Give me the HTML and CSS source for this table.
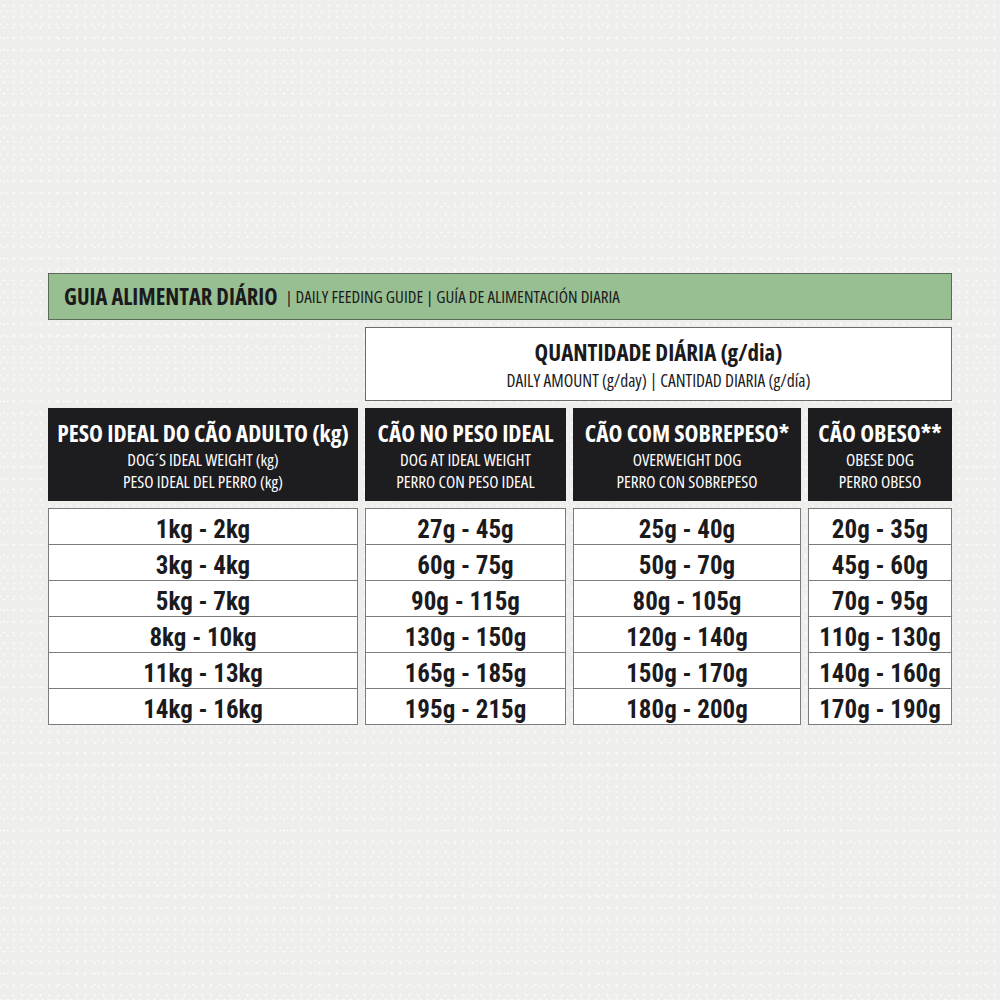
FILE: index.html
```html
<!DOCTYPE html>
<html lang="pt">
<head>
<meta charset="utf-8">
<title>Guia Alimentar Diário</title>
<link rel="stylesheet" href="styles.css">
</head>
<body>
<main class="sheet">
  <header class="title-bar">
    <span class="title-main">GUIA ALIMENTAR DIÁRIO</span>
    <span class="title-sub">| DAILY FEEDING GUIDE | GUÍA DE ALIMENTACIÓN DIARIA</span>
  </header>
  <section class="grid">
    <div class="spacer"></div>
    <div class="amount">
      <div class="amount-main">QUANTIDADE DIÁRIA (g/dia)</div>
      <div class="amount-sub">DAILY AMOUNT (g/day) | CANTIDAD DIARIA (g/día)</div>
    </div>

    <div class="head">
      <div class="head-main">PESO IDEAL DO CÃO ADULTO (kg)</div>
      <div class="head-sub">DOG´S IDEAL WEIGHT (kg)</div>
      <div class="head-sub">PESO IDEAL DEL PERRO (kg)</div>
    </div>
    <div class="head">
      <div class="head-main">CÃO NO PESO IDEAL</div>
      <div class="head-sub">DOG AT IDEAL WEIGHT</div>
      <div class="head-sub">PERRO CON PESO IDEAL</div>
    </div>
    <div class="head">
      <div class="head-main">CÃO COM SOBREPESO*</div>
      <div class="head-sub">OVERWEIGHT DOG</div>
      <div class="head-sub">PERRO CON SOBREPESO</div>
    </div>
    <div class="head">
      <div class="head-main">CÃO OBESO**</div>
      <div class="head-sub">OBESE DOG</div>
      <div class="head-sub">PERRO OBESO</div>
    </div>

    <div class="col">
      <div class="cell">1kg - 2kg</div>
      <div class="cell">3kg - 4kg</div>
      <div class="cell">5kg - 7kg</div>
      <div class="cell">8kg - 10kg</div>
      <div class="cell">11kg - 13kg</div>
      <div class="cell">14kg - 16kg</div>
    </div>
    <div class="col">
      <div class="cell">27g - 45g</div>
      <div class="cell">60g - 75g</div>
      <div class="cell">90g - 115g</div>
      <div class="cell">130g - 150g</div>
      <div class="cell">165g - 185g</div>
      <div class="cell">195g - 215g</div>
    </div>
    <div class="col">
      <div class="cell">25g - 40g</div>
      <div class="cell">50g - 70g</div>
      <div class="cell">80g - 105g</div>
      <div class="cell">120g - 140g</div>
      <div class="cell">150g - 170g</div>
      <div class="cell">180g - 200g</div>
    </div>
    <div class="col">
      <div class="cell">20g - 35g</div>
      <div class="cell">45g - 60g</div>
      <div class="cell">70g - 95g</div>
      <div class="cell">110g - 130g</div>
      <div class="cell">140g - 160g</div>
      <div class="cell">170g - 190g</div>
    </div>
  </section>
</main>
</body>
</html>
```
FILE: styles.css
```css
html, body {
  margin: 0;
  padding: 0;
}
body {
  width: 1000px;
  height: 1000px;
  background-color: #eeeeec;
  background-image:
    radial-gradient(circle, #fafaf9 0.9px, transparent 1.3px),
    radial-gradient(circle, #f7f7f6 0.9px, transparent 1.3px);
  background-size: 9px 11px, 7px 13px;
  background-position: 0 0, 4px 5px;
  font-family: "Open Sans", "DejaVu Sans Condensed", sans-serif;
  font-stretch: 75%;
  color: #1b1a1d;
}
.sheet {
  padding: 273px 48px 0 48px;
  width: 904px;
}
.title-bar {
  box-sizing: border-box;
  height: 47px;
  background: #98bf92;
  border: 1px solid #5d6a5b;
  display: flex;
  align-items: center;
  padding-left: 15px;
  gap: 8px;
  white-space: nowrap;
}
.title-main {
  font-weight: 700;
  font-size: 22.5px;
}
.title-sub {
  font-size: 17px;
}
.grid {
  margin-top: 7px;
  display: grid;
  grid-template-columns: 310px 201px 228px 144px;
  column-gap: 7px;
  row-gap: 7px;
}
.amount {
  grid-column: 2 / 5;
  box-sizing: border-box;
  height: 74px;
  background: #fff;
  border: 1px solid #6b6b6b;
  display: flex;
  flex-direction: column;
  align-items: center;
  justify-content: center;
  white-space: nowrap;
}
.amount-main {
  font-weight: 700;
  font-size: 23px;
  line-height: 31px;
}
.amount-sub {
  font-size: 17.5px;
  line-height: 24px;
}
.head {
  height: 93px;
  background: #1d1c1f;
  color: #fff;
  display: flex;
  flex-direction: column;
  align-items: center;
  justify-content: center;
  text-align: center;
  white-space: nowrap;
}
.head-main {
  font-weight: 700;
  font-size: 23.5px;
  line-height: 32px;
}
.head-sub {
  font-size: 17px;
  line-height: 22px;
}
.col {
  box-sizing: border-box;
  border: 1px solid #7c7c7c;
  background: #fff;
  display: flex;
  flex-direction: column;
}
.cell {
  height: 36px;
  display: flex;
  align-items: center;
  justify-content: center;
  padding-top: 6px;
  font-family: "Roboto", "Liberation Sans", sans-serif;
  font-stretch: 86%;
  font-weight: 700;
  font-size: 25px;
  border-top: 1px solid #7c7c7c;
  box-sizing: border-box;
  white-space: nowrap;
}
.cell:first-child {
  border-top: none;
  height: 35px;
}
```
